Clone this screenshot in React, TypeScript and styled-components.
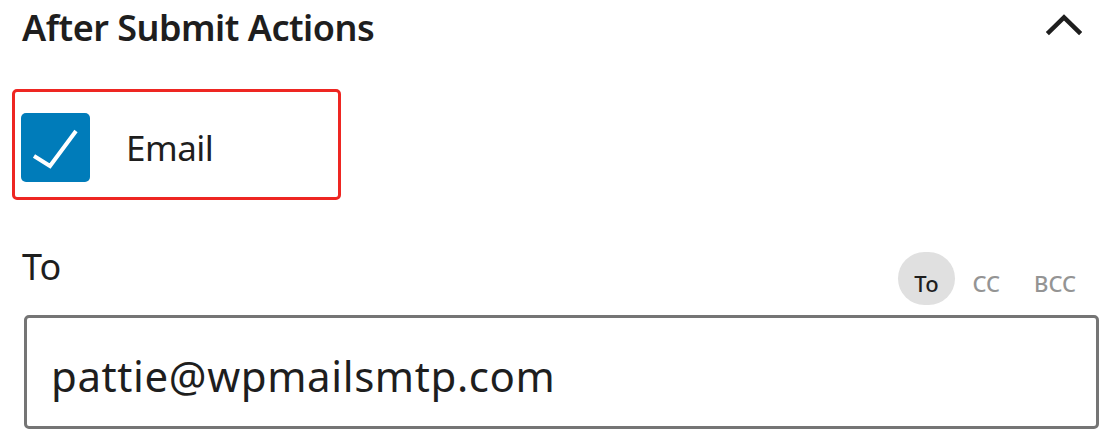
import React from 'react';
import styled, { createGlobalStyle } from 'styled-components';

const GlobalStyle = createGlobalStyle`
	html, body {
		margin: 0;
		padding: 0;
		background: #ffffff;
	}
	body {
		font-family: 'Noto Sans', 'Open Sans', Arial, sans-serif;
		color: #1e1e1e;
	}
`;

const Panel = styled.div`
	width: 1116px;
	height: 443px;
	box-sizing: border-box;
	padding: 0 17px 0 22px;
	display: flex;
	flex-direction: column;
`;

const Header = styled.div`
	display: flex;
	align-items: center;
	justify-content: space-between;
	height: 50px;
	padding-top: 3px;
`;

const Title = styled.h2`
	margin: 0;
	font-size: 36px;
	line-height: 50px;
	font-weight: 600;
	letter-spacing: -0.5px;
`;

const Toggle = styled.button`
	display: flex;
	align-items: center;
	justify-content: center;
	width: 40px;
	height: 40px;
	margin-right: 15px;
	margin-top: -7px;
	padding: 0;
	border: none;
	background: transparent;
	cursor: pointer;
`;

const Highlight = styled.div`
	display: flex;
	align-items: center;
	gap: 36px;
	width: 329px;
	height: 111px;
	box-sizing: border-box;
	margin: 36px 0 0 -10px;
	padding: 6px 0 0 6px;
	border: 3px solid #ee2622;
	border-radius: 5px;
`;

const CheckBox = styled.span<{ $checked: boolean }>`
	display: flex;
	align-items: center;
	justify-content: center;
	width: 69px;
	height: 69px;
	border-radius: 5px;
	background: ${(p) => (p.$checked ? '#007cba' : '#ffffff')};
	border: ${(p) => (p.$checked ? 'none' : '2px solid #1e1e1e')};
`;

const CheckLabel = styled.span`
	font-size: 35px;
	line-height: 44px;
	font-weight: 400;
	letter-spacing: -0.5px;
`;

const FieldHead = styled.div`
	display: flex;
	justify-content: space-between;
	align-items: flex-start;
	margin-top: 47px;
	height: 58px;
`;

const FieldLabel = styled.label`
	font-size: 36px;
	line-height: 40px;
	font-weight: 400;
`;

const Tabs = styled.div`
	display: flex;
	align-items: center;
	gap: 2px;
	margin-top: 5px;
	margin-right: 7px;
`;

const Tab = styled.button<{ $active?: boolean }>`
	display: flex;
	align-items: flex-end;
	justify-content: center;
	min-width: 53px;
	height: 53px;
	box-sizing: border-box;
	padding: 0 16px 9px;
	border: none;
	border-radius: 27px;
	background: ${(p) => (p.$active ? '#e0e0e0' : 'transparent')};
	color: ${(p) => (p.$active ? '#1e1e1e' : '#949494')};
	font-family: 'Noto Sans', 'Open Sans', Arial, sans-serif;
	font-size: 22px;
	line-height: 26px;
	font-weight: 500;
	cursor: pointer;
`;

const EmailInput = styled.input`
	display: block;
	width: 1075px;
	height: 114px;
	box-sizing: border-box;
	margin: 10px 0 0 2px;
	padding: 6px 24px 0;
	border: 3px solid #757575;
	border-radius: 5px;
	background: #ffffff;
	color: #1e1e1e;
	font-family: 'Noto Sans', 'Open Sans', Arial, sans-serif;
	font-size: 42px;
	letter-spacing: 0.6px;
	outline: none;
`;

function ChevronUp(): JSX.Element {
	return (
		<svg width="36" height="22" viewBox="0 0 36 22" fill="none">
			<polyline
				points="3,18 18,3.5 33,18"
				stroke="#1e1e1e"
				strokeWidth="4.5"
				strokeLinecap="square"
			/>
		</svg>
	);
}

function CheckMark(): JSX.Element {
	return (
		<svg width="69" height="69" viewBox="0 0 69 69" fill="none">
			<polyline
				points="13,43 29,53 55,18"
				stroke="#ffffff"
				strokeWidth="4"
				strokeLinejoin="miter"
			/>
		</svg>
	);
}

export default function App(): JSX.Element {
	return (
		<>
			<GlobalStyle />
			<Panel>
				<Header>
					<Title>After Submit Actions</Title>
					<Toggle aria-label="Collapse">
						<ChevronUp />
					</Toggle>
				</Header>

				<Highlight>
					<CheckBox $checked>
						<CheckMark />
					</CheckBox>
					<CheckLabel>Email</CheckLabel>
				</Highlight>

				<FieldHead>
					<FieldLabel>To</FieldLabel>
					<Tabs>
						<Tab $active>To</Tab>
						<Tab>CC</Tab>
						<Tab>BCC</Tab>
					</Tabs>
				</FieldHead>

				<EmailInput readOnly defaultValue="pattie@wpmailsmtp.com" />
			</Panel>
		</>
	);
}
